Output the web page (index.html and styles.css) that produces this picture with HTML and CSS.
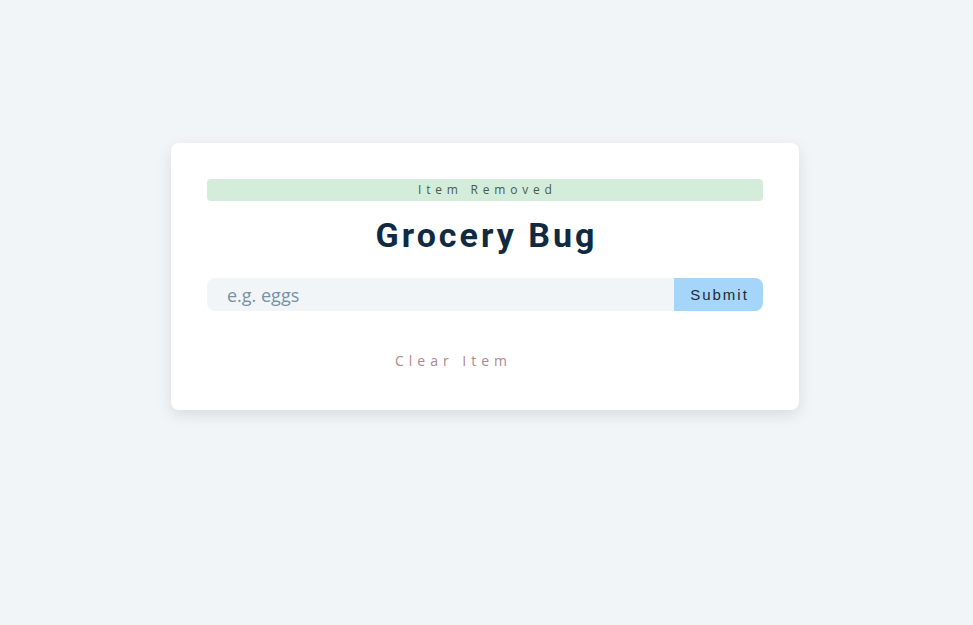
FILE: index.html
```html
<!DOCTYPE html>
<html lang="en">
<head>
<meta charset="utf-8">
<title>Grocery Bug</title>
<link rel="stylesheet" href="styles.css">
</head>
<body>
<section class="card">
  <p class="alert">Item Removed</p>
  <h3 class="title">Grocery Bug</h3>
  <form class="grocery-form">
    <input class="grocery-input" type="text" placeholder="e.g. eggs">
    <button class="submit-btn" type="button">Submit</button>
  </form>
  <button class="clear-btn" type="button">Clear Item</button>
</section>
</body>
</html>
```

FILE: styles.css
```css
* { box-sizing: border-box; }
html, body { margin: 0; padding: 0; }
body {
  background: #f1f5f8;
  min-height: 625px;
  padding-right: 3px;
  font-family: "Open Sans", "Liberation Sans", sans-serif;
}
.card {
  width: 628px;
  margin: 143px auto 0;
  background: #fff;
  border-radius: 8px;
  box-shadow: 0 5px 15px rgba(0, 0, 0, 0.1);
  padding: 36px 36px 39px;
}
.alert {
  margin: 0;
  height: 22px;
  line-height: 22px;
  background: #d4edda;
  color: #485a4e;
  border-radius: 4px;
  text-align: center;
  font-size: 12px;
  letter-spacing: 4.8px;
  text-indent: 4.8px;
}
.title {
  margin: 14px 0 23px;
  font-family: Roboto, "Liberation Sans", sans-serif;
  font-weight: 700;
  font-size: 34px;
  line-height: 40px;
  letter-spacing: 3px;
  text-indent: 3px;
  color: #102a42;
  text-align: center;
}
.grocery-form {
  display: flex;
  height: 33px;
  margin: 0;
}
.grocery-input {
  flex: 1;
  min-width: 0;
  border: none;
  outline: none;
  background: #f1f5f8;
  border-radius: 8px 0 0 8px;
  padding: 0 0 0 20px;
  font-family: "Open Sans", sans-serif;
  font-size: 18px;
  color: #102a42;
}
.grocery-input::placeholder { color: #7890a4; }
.submit-btn {
  width: 89px;
  border: none;
  background: #a5d5f8;
  border-radius: 0 8px 8px 0;
  font-family: "Liberation Sans", Arial, sans-serif;
  font-size: 15px;
  letter-spacing: 2px;
  text-indent: 2px;
  color: #1e2a33;
  padding: 0;
}
.clear-btn {
  display: block;
  margin: 40px 0 0 183px;
  height: 20px;
  line-height: 20px;
  padding: 0;
  border: none;
  background: transparent;
  font-family: "Open Sans", sans-serif;
  font-size: 14px;
  letter-spacing: 5px;
  text-indent: 5px;
  color: #b0878b;
}
```
